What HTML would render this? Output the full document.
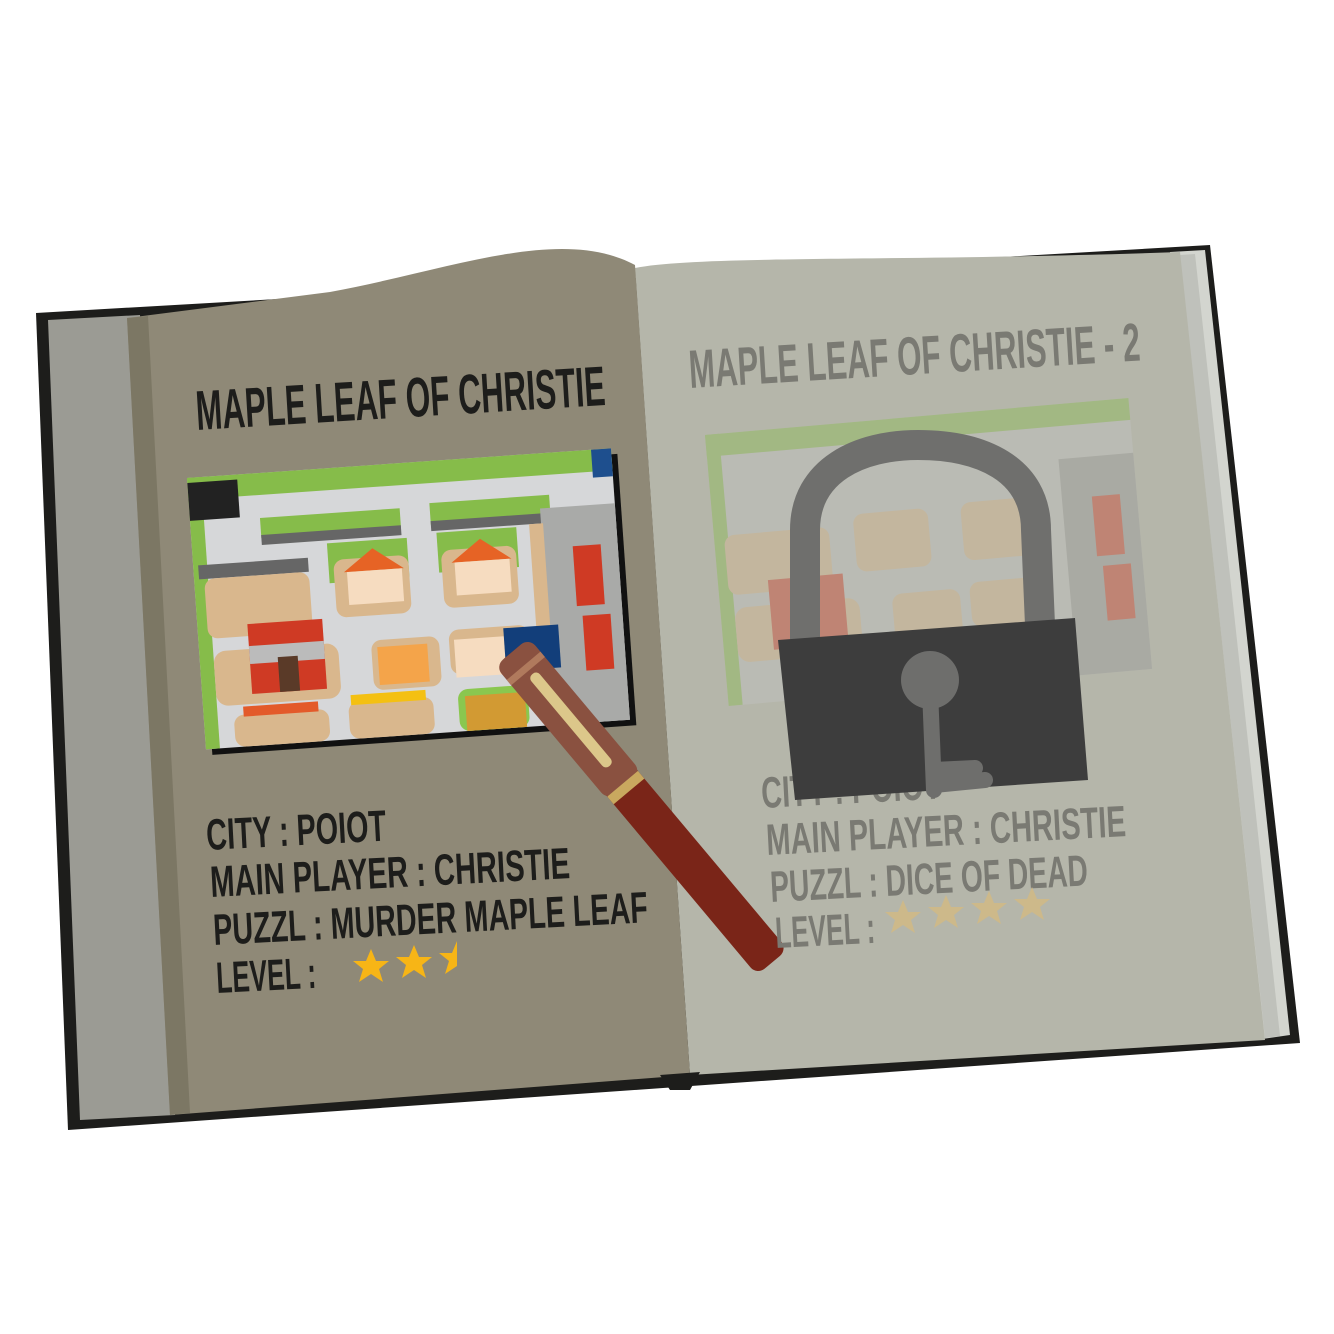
<!DOCTYPE html>
<html><head><meta charset="utf-8"><style>
html,body{margin:0;padding:0;background:#fff;width:1334px;height:1334px;overflow:hidden}
svg{display:block}
text{font-family:"Liberation Sans",sans-serif;font-weight:bold}
</style></head><body>
<svg width="1334" height="1334" viewBox="0 0 1334 1334">
<polygon points="36,313 1210,245 1300,1043 68,1130" fill="#1d1d1b"/>
<polygon points="48,320 140,315 175,1115 80,1120" fill="#9b9b94"/>
<polygon points="1170,252 1205,250 1290,1035 1255,1040" fill="#d3d5cf"/>
<polygon points="1180,255 1195,254 1280,1036 1265,1038" fill="#bfc1bb"/>
<path d="M635,268 C700,255 900,262 1180,252 L1265,1040 L690,1075 Z" fill="#b5b6aa"/>
<path d="M127,318 L330,292 C450,270 560,225 635,265 L690,1075 L170,1115 Z" fill="#8f8977"/>
<polygon points="127,318 148,316 190,1113 170,1115" fill="#7c7764"/>
<path d="M660,1075 L700,1072 L690,1090 L670,1090 Z" fill="#1d1d1b"/>

<text transform="translate(197,430) rotate(-3.5)" font-size="56" textLength="410" lengthAdjust="spacingAndGlyphs" fill="#1d1d1b">MAPLE LEAF OF CHRISTIE</text>

<g transform="translate(187,478) rotate(-4)">
<rect x="6" y="6" width="425" height="272" fill="#111"/>
<rect x="0" y="0" width="425" height="272" fill="#d6d7d9"/>
<rect x="0" y="0" width="425" height="22" fill="#86bc4a"/>
<rect x="0" y="0" width="14" height="272" fill="#86bc4a"/>
<rect x="70" y="45" width="140" height="20" fill="#86bc4a"/>
<rect x="70" y="62" width="140" height="10" fill="#666"/>
<rect x="240" y="42" width="120" height="22" fill="#86bc4a"/>
<rect x="240" y="60" width="120" height="10" fill="#666"/>
<rect x="135" y="75" width="80" height="40" fill="#86bc4a"/>
<rect x="245" y="72" width="80" height="40" fill="#86bc4a"/>
<rect x="5" y="88" width="110" height="14" fill="#666"/>
<rect x="10" y="102" width="105" height="60" rx="10" fill="#d9b78d"/>
<rect x="140" y="92" width="75" height="58" rx="10" fill="#d9b78d"/>
<rect x="248" y="90" width="75" height="58" rx="10" fill="#d9b78d"/>
<rect x="350" y="55" width="75" height="217" fill="#a9aaa8"/>
<rect x="338" y="70" width="14" height="190" fill="#d9b78d"/>
<rect x="14" y="175" width="125" height="55" rx="12" fill="#d9b78d"/>
<rect x="172" y="175" width="68" height="50" rx="10" fill="#d9b78d"/>
<rect x="250" y="170" width="80" height="45" rx="10" fill="#d9b78d"/>
<rect x="30" y="240" width="95" height="32" rx="10" fill="#d9b78d"/>
<rect x="145" y="235" width="85" height="37" rx="10" fill="#d9b78d"/>
<rect x="255" y="230" width="70" height="42" rx="10" fill="#8ac74f"/>
<rect x="262" y="237" width="60" height="35" fill="#d29a33"/>
<rect x="50" y="150" width="75" height="70" fill="#cf3a24"/>
<rect x="50" y="172" width="75" height="18" fill="#bbb"/>
<rect x="78" y="185" width="20" height="35" fill="#5a3a28"/>
<path d="M150,105 l30,-22 l30,22 z" fill="#e66325"/>
<rect x="153" y="105" width="55" height="33" fill="#f6dcc0"/>
<path d="M258,103 l30,-22 l30,22 z" fill="#e66325"/>
<rect x="261" y="103" width="55" height="33" fill="#f6dcc0"/>
<rect x="178" y="182" width="50" height="38" fill="#f4a44a"/>
<rect x="255" y="180" width="50" height="38" fill="#f6dcc0"/>
<rect x="305" y="172" width="55" height="43" fill="#123e7a"/>
<rect x="380" y="95" width="28" height="60" fill="#cf3a24"/>
<rect x="385" y="165" width="28" height="55" fill="#cf3a24"/>
<rect x="40" y="232" width="75" height="10" fill="#e35a2a"/>
<rect x="148" y="228" width="75" height="10" fill="#f4c012"/>
<rect x="0" y="5" width="50" height="38" fill="#222"/>
<rect x="405" y="0" width="20" height="28" fill="#1e4f8e"/>
</g>

<g fill="#1d1d1b">
<text transform="translate(207,850) rotate(-3)" font-size="44" textLength="180" lengthAdjust="spacingAndGlyphs">CITY : POIOT</text>
<text transform="translate(211,897) rotate(-3)" font-size="44" textLength="360" lengthAdjust="spacingAndGlyphs">MAIN PLAYER : CHRISTIE</text>
<text transform="translate(214,945) rotate(-3)" font-size="44" textLength="435" lengthAdjust="spacingAndGlyphs">PUZZL : MURDER MAPLE LEAF</text>
<text transform="translate(217,993) rotate(-3)" font-size="44" textLength="100" lengthAdjust="spacingAndGlyphs">LEVEL :</text>
</g>
<g fill="#f7b516">
<polygon transform="translate(371,967)" points="0,-18 5,-6 18,-6 8,2 12,15 0,7 -12,15 -8,2 -18,-6 -5,-6"/>
<polygon transform="translate(414,963)" points="0,-18 5,-6 18,-6 8,2 12,15 0,7 -12,15 -8,2 -18,-6 -5,-6"/>
<polygon transform="translate(457,959)" points="0,-18 0,7 -12,15 -8,2 -18,-6 -5,-6"/>
</g>

<g transform="translate(512,652) rotate(50)">
<rect x="0" y="-20" width="405" height="40" rx="10" fill="#7a2518"/>
<rect x="0" y="-22" width="175" height="44" rx="10" fill="#8a5140"/>
<rect x="172" y="-20" width="10" height="40" fill="#c9a85f"/>
<rect x="18" y="-22" width="7" height="44" fill="#b07a5d"/>
<rect x="30" y="-7" width="120" height="11" rx="5" fill="#dcc78a"/>
</g>

<text transform="translate(690,388) rotate(-3.5)" font-size="54" textLength="452" lengthAdjust="spacingAndGlyphs" fill="#7a7a73">MAPLE LEAF OF CHRISTIE - 2</text>

<g transform="translate(705,435) rotate(-5)" opacity="0.4">
<rect x="0" y="0" width="425" height="272" fill="#c3c4c4"/>
<rect x="0" y="0" width="425" height="22" fill="#86bc4a"/>
<rect x="0" y="0" width="14" height="272" fill="#86bc4a"/>
<rect x="10" y="102" width="105" height="60" rx="10" fill="#d9b78d"/>
<rect x="14" y="175" width="125" height="55" rx="12" fill="#d9b78d"/>
<rect x="140" y="92" width="75" height="58" rx="10" fill="#d9b78d"/>
<rect x="248" y="90" width="75" height="58" rx="10" fill="#d9b78d"/>
<rect x="172" y="175" width="68" height="50" rx="10" fill="#d9b78d"/>
<rect x="250" y="170" width="80" height="45" rx="10" fill="#d9b78d"/>
<rect x="350" y="55" width="75" height="217" fill="#999"/>
<rect x="380" y="95" width="28" height="60" fill="#cf3a24"/>
<rect x="385" y="165" width="28" height="55" fill="#cf3a24"/>
<rect x="50" y="150" width="75" height="70" fill="#cf3a24"/>
</g>

<g fill="#7a7a73">
<text transform="translate(762,808) rotate(-3)" font-size="44" textLength="180" lengthAdjust="spacingAndGlyphs">CITY : POIOT</text>
<text transform="translate(767,855) rotate(-3)" font-size="44" textLength="360" lengthAdjust="spacingAndGlyphs">MAIN PLAYER : CHRISTIE</text>
<text transform="translate(771,902) rotate(-3)" font-size="44" textLength="318" lengthAdjust="spacingAndGlyphs">PUZZL : DICE OF DEAD</text>
<text transform="translate(776,948) rotate(-3)" font-size="44" textLength="100" lengthAdjust="spacingAndGlyphs">LEVEL :</text>
</g>
<g fill="#cdb98a">
<polygon transform="translate(903,918)" points="0,-18 5,-6 18,-6 8,2 12,15 0,7 -12,15 -8,2 -18,-6 -5,-6"/>
<polygon transform="translate(946,913)" points="0,-18 5,-6 18,-6 8,2 12,15 0,7 -12,15 -8,2 -18,-6 -5,-6"/>
<polygon transform="translate(989,909)" points="0,-18 5,-6 18,-6 8,2 12,15 0,7 -12,15 -8,2 -18,-6 -5,-6"/>
<polygon transform="translate(1032,905)" points="0,-18 5,-6 18,-6 8,2 12,15 0,7 -12,15 -8,2 -18,-6 -5,-6"/>
</g>

<path d="M805,640 L805,530 C805,470 860,445 918,445 C980,445 1036,468 1036,530 L1040,625" fill="none" stroke="#6f6f6d" stroke-width="30"/>
<polygon points="778,640 1075,618 1088,780 795,800" fill="#3d3d3d"/>
<circle cx="930" cy="680" r="29" fill="#6e6e6c"/>
<path d="M930,690 L934,790 M934,770 L975,768 M934,785 L985,780" stroke="#6e6e6c" stroke-width="16" stroke-linecap="round" fill="none"/>
</svg>
</body></html>
